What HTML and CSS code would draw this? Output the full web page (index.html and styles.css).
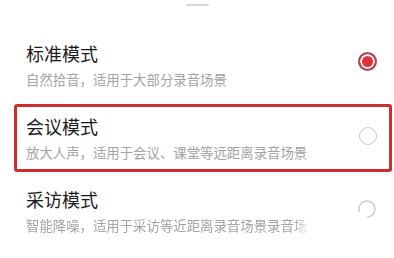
FILE: index.html
```html
<!DOCTYPE html>
<html lang="zh-CN">
<head>
    <meta charset="UTF-8">
    <meta name="viewport" content="width=device-width, initial-scale=1.0">
    <title>录音模式</title>
    <link rel="stylesheet" href="styles.css">
</head>
<body>

    <!-- Bottom sheet -->
    <div class="sheet">
        <div class="handle"></div>

        <div class="mode-list">
            <div class="mode">
                <div class="mode-text">
                    <p class="mode-title">标准模式</p>
                    <p class="mode-desc">自然拾音，适用于大部分录音场景</p>
                </div>
                <span class="radio radio-on"></span>
            </div>

            <div class="mode mode-marked">
                <div class="mode-text">
                    <p class="mode-title">会议模式</p>
                    <p class="mode-desc">放大人声，适用于会议、课堂等远距离录音场景</p>
                </div>
                <span class="radio"></span>
            </div>

            <div class="mode">
                <div class="mode-text">
                    <p class="mode-title">采访模式</p>
                    <p class="mode-desc mode-desc-cut">智能降噪，适用于采访等近距离录音场景录音场景</p>
                </div>
                <svg class="radio-busy" width="20" height="20" viewBox="0 0 20 20">
                    <circle cx="10" cy="10" r="8" fill="none" stroke="#cfcfcf" stroke-width="1.6"
                            stroke-dasharray="40 10.3" transform="rotate(-200 10 10)"/>
                </svg>
            </div>
        </div>
    </div>

</body>
</html>
```

FILE: styles.css
```css
body {
    margin: 0;
    background-color: white;
    font-family: "Noto Sans CJK SC", "Noto Sans", sans-serif;
}

.sheet {
    padding-top: 4px;
}

.handle {
    width: 23px;
    height: 2px;
    margin: 0 auto;
    background-color: #d6d6d6;
    border-radius: 1px;
}

.mode-list {
    display: flex;
    flex-direction: column;
    gap: 5px;
    margin: 25px 2px 0 14px;
}

.mode {
    display: flex;
    align-items: center;
    justify-content: space-between;
    height: 68px;
    box-sizing: border-box;
    padding: 7px 12px 8px 9px;
    border: 3px solid transparent;
    border-radius: 3px;
}

.mode-marked {
    border-color: #cc2f2b;
}

.mode-text {
    flex: 1;
    min-width: 0;
}

.mode-title {
    margin: 0;
    font-size: 18px;
    line-height: 24px;
    color: #1b1b1b;
}

.mode-desc {
    margin: 5px 0 0 0;
    font-size: 13.4px;
    line-height: 18px;
    color: #a3a3a3;
    white-space: nowrap;
}

.mode-desc-cut {
    width: 284px;
    overflow: hidden;
    -webkit-mask-image: linear-gradient(to right, black 268px, transparent 284px);
    mask-image: linear-gradient(to right, black 268px, transparent 284px);
}

.radio {
    width: 18px;
    height: 18px;
    margin-bottom: 3px;
    box-sizing: border-box;
    border: 1.5px solid #cbcbcb;
    border-radius: 50%;
}

.radio-on {
    width: 19px;
    height: 19px;
    margin-bottom: 7px;
    border: 2px solid #c23d4a;
    background-color: #e2303f;
    box-shadow: inset 0 0 0 2px white;
}

.radio-busy {
    margin-bottom: 4px;
}
```
